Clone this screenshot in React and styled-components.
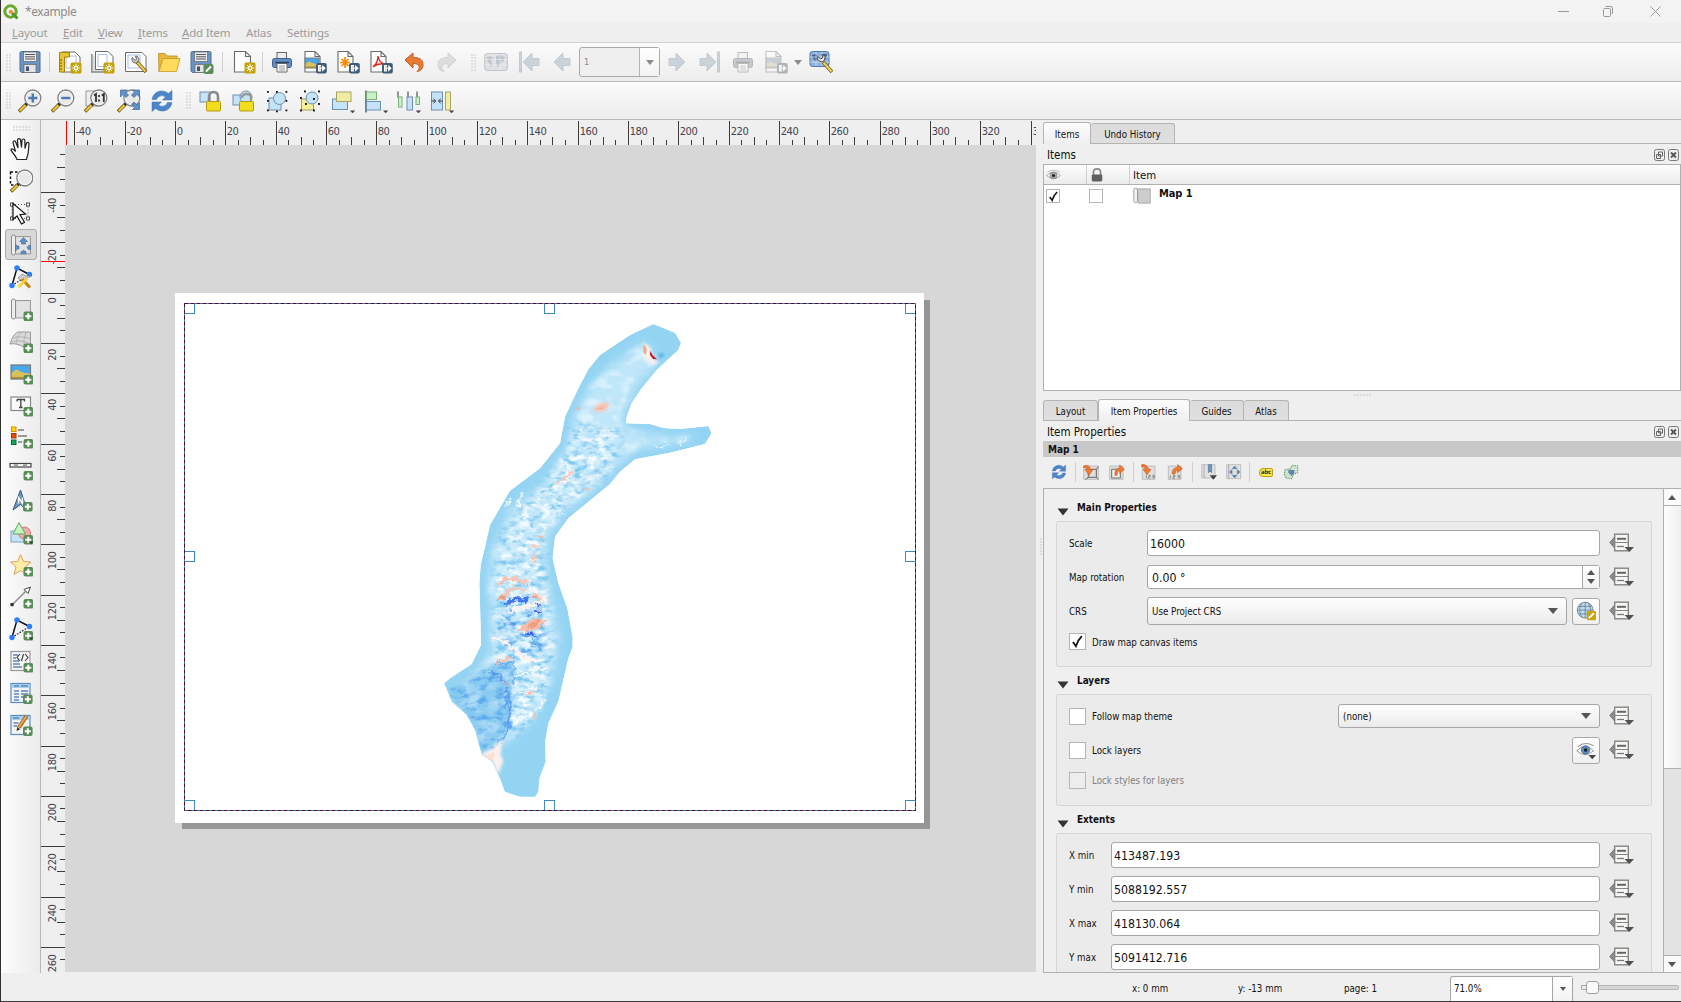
import React from 'react';
import styled, { createGlobalStyle, css } from 'styled-components';

const UI = `"DejaVu Sans Condensed", "DejaVu Sans", sans-serif`;
const MENU = `"Noto Sans", "Open Sans", sans-serif`;

const Global = createGlobalStyle`
  html, body { margin: 0; padding: 0; background: #efefef; overflow: hidden; }
  *, *::before, *::after { box-sizing: border-box; }
  body { font-family: ${UI}; font-stretch: condensed; font-size: 9.7px; color: #111; }
  svg { display: block; flex: none; }
`;

/* ---------- shell ---------- */
const Window = styled.div`
  width: 1681px; height: 1002px; display: flex; flex-direction: column;
  background: #efefef; border-left: 1px solid #2f2f2f; border-bottom: 1px solid #3c3c3c; overflow: hidden;
`;
const TitleBar = styled.header`
  height: 23px; flex: none; display: flex; align-items: center; background: #f3f3f3; padding-left: 2px;
  font-family: ${MENU}; font-size: 12px; letter-spacing: -0.42px; color: #8c8c8c;
`;
const TitleText = styled.span`flex: 1; padding-left: 6px;`;
const WinButtons = styled.div`display: flex; gap: 30px; padding-right: 15px;`;
const MenuBar = styled.nav`
  height: 20px; flex: none; display: flex; align-items: center; padding: 0 0 1px 11px; border-bottom: 1px solid #d2d2d2;
  font-family: ${MENU}; font-size: 11.5px; letter-spacing: -0.2px; color: #9b9b9b;
`;
const MenuItem = styled.div`
  width: ${p => p.$w}px; white-space: nowrap;
  &::first-letter { text-decoration: ${p => (p.$plain ? 'none' : 'underline')}; }
`;
const Toolbar = styled.div`
  height: ${p => p.$h}px; flex: none; display: flex; align-items: center; padding-left: 5px;
  background: linear-gradient(#fbfbfb, #ededed); border-bottom: 1px solid #b7b7b7;
`;
const ToolButton = styled.div`
  width: ${p => p.$w || 33}px; height: 32px; flex: none; display: flex; align-items: center; justify-content: center;
  opacity: ${p => (p.$off ? 0.4 : 1)};
`;
const Sep = styled.div`
  width: ${p => p.$w}px; height: ${p => p.$h || 20}px; flex: none; display: flex; justify-content: center;
  &::after { content: ''; width: 1px; background: #d0d0d0; }
`;
const Grip = styled.div`
  flex: none; width: ${p => p.$w}px; height: ${p => p.$h}px; margin: ${p => p.$m || 0};
  background-image: radial-gradient(circle at 1px 1px, #c6c6c6 0.6px, transparent 0.8px);
  background-size: 3px 3px;
`;
const PageCombo = styled.div`
  width: 81px; height: 30px; margin: 0 0 0 1px; flex: none; display: flex; border: 1px solid #a9a9a9; border-radius: 3px;
  background: #efefef; color: #7b8794; font-size: 9px;
`;
const PageValue = styled.div`flex: 1; padding-left: 4px; display: flex; align-items: center; border-right: 1px solid #b4b4b4;`;
const DropCell = styled.div`
  width: ${p => p.$w}px; display: flex; align-items: center; justify-content: center; background: linear-gradient(#fff, #f3f3f3);
`;
const Caret = styled.span`
  width: 0; height: 0; flex: none; border: ${p => p.$s || 4}px solid transparent; border-bottom: 0;
  border-top: ${p => (p.$s || 4) + 1}px solid ${p => p.$c || '#555'};
  ${p => p.$up && css`transform: rotate(180deg);`}
`;

const Body = styled.div`flex: 1; min-height: 0; display: flex;`;
const SideTools = styled.aside`
  width: 40px; flex: none; display: flex; flex-direction: column; align-items: center; padding-top: 6px;
  background: linear-gradient(90deg, #fcfcfc, #ececec); border-right: 1px solid #b7b7b7;
`;
const SideButton = styled.div`
  width: 32px; height: 31px; margin-bottom: 1px; flex: none; display: flex; align-items: center; justify-content: center;
  border: 1px solid ${p => (p.$on ? '#acacac' : 'transparent')}; border-radius: 3px;
  background: ${p => (p.$on ? '#d8d8d8' : 'none')};
`;
const Center = styled.main`
  width: 995px; flex: none; display: grid; grid-template: 25px 1fr / 24px 1fr; height: 852px;
`;
const RulerRow = styled.div`grid-column: 1 / 3;`;
const RulerText = styled.text`font-family: ${UI}; font-stretch: condensed; font-size: 11px; letter-spacing: -0.4px; fill: #3f4450;`;
const Canvas = styled.div`position: relative; background: #d7d7d7; overflow: hidden;`;
const Sheet = styled.div`
  position: absolute; left: 110px; top: 148px; width: 749px; height: 530px; background: #fff;
  &::before { content: ''; position: absolute; left: 749px; top: 7px; width: 6px; height: 529px; background: #969696; }
  &::after { content: ''; position: absolute; left: 7px; top: 530px; width: 748px; height: 6px; background: #969696; }
`;
const OnCanvas = styled.svg`position: absolute; left: ${p => p.$x}px; top: ${p => p.$y}px;`;

/* ---------- docks ---------- */
const Splitter = styled.div`
  width: 7px; height: 853px; flex: none; display: flex; align-items: center; justify-content: center;
`;
const Dock = styled.section`width: 638px; height: 853px; flex: none; display: flex; flex-direction: column;`;
const Tabs = styled.div`
  height: ${p => p.$h}px; flex: none; display: flex; align-items: flex-end; border-bottom: 1px solid #b4b4b4;
`;
const Tab = styled.div`
  width: ${p => p.$w}px; height: ${p => (p.$on ? 22 : 20)}px; flex: none; display: flex; align-items: center; justify-content: center;
  border: 1px solid #b4b4b4; border-left-width: ${p => (p.$first || p.$on ? 1 : 0)}px; border-bottom: 0;
  border-radius: 3px 3px 0 0; margin-bottom: ${p => (p.$on ? -1 : 0)}px; padding-top: 1px;
  background: ${p => (p.$on ? 'linear-gradient(#fdfdfd,#efefef)' : 'linear-gradient(#dcdcdc,#dfdfdf)')};
`;
const DockTitle = styled.div`
  height: 20px; flex: none; display: flex; align-items: center; justify-content: space-between; padding: 2px 2px 0 4px;
  font-size: 11.5px;
`;
const TitleIcons = styled.div`display: flex; gap: 3px;`;
const Tree = styled.div`height: 227px; flex: none; background: #fff; border: 1px solid #b0b0b0;`;
const TreeHead = styled.div`
  height: 20px; display: flex; background: linear-gradient(#fdfdfd, #ebebeb); border-bottom: 1px solid #b0b0b0;
  font-size: 11.3px;
`;
const HeadCell = styled.div`
  width: ${p => p.$w}; display: flex; align-items: center; padding: 1px 0 0 ${p => p.$pl}px; border-right: ${p => (p.$last ? 0 : 1)}px solid #cfcfcf;
`;
const TreeRow = styled.div`height: 22px; display: flex; align-items: center; padding-left: 2px;`;
const TreeName = styled.b`font-size: 11px; letter-spacing: -0.1px; margin: -6px 0 0 8px;`;
const SplitDots = styled.div`height: 8px; flex: none; display: flex; justify-content: center; align-items: center;`;
const ItemBar = styled.div`
  height: 16px; flex: none; display: flex; align-items: center; padding: 1px 0 0 5px; background: #c8c8c8; font-weight: bold; font-size: 10px;
`;
const PropTools = styled.div`height: 31px; flex: none; display: flex; align-items: center; padding: 0 0 1px 3px;`;
const Scroll = styled.div`flex: 1; min-height: 0; display: flex; border: 1px solid #b0b0b0; border-right: 0; overflow: hidden;`;
const Props = styled.div`flex: 1; min-width: 0; overflow: hidden; padding: 0 11px 0 12px;`;
const ScrollBar = styled.div`
  width: 18px; flex: none; display: flex; flex-direction: column; background: #e3e3e3; border-left: 1px solid #b0b0b0;
`;
const ScrollEnd = styled.div`
  height: 17px; flex: none; display: flex; align-items: center; justify-content: center; background: #fafafa; padding-right: 2px;
  border-${p => p.$edge}: 1px solid #b0b0b0;
`;
const Thumb = styled.div`height: 263px; background: linear-gradient(90deg, #fdfdfd, #efefef); border-bottom: 1px solid #b0b0b0;`;
const ThumbGap = styled.div`flex: 1;`;

const GroupTitle = styled.div`
  height: ${p => p.$h}px; display: flex; align-items: flex-end; gap: 8px; padding-bottom: 7px;
  font-weight: bold; font-size: 9.9px; line-height: 12px;
`;
const TitleTri = styled.svg`margin: 0 0 -2px 1px;`;
const Group = styled.div`
  height: ${p => p.$h}px; border: 1px solid #d6d6d6; border-radius: 2px; background: #ebebeb; padding: ${p => p.$pt}px 17px 0 12px;
`;
const Row = styled.div`height: ${p => p.$h}px; margin-bottom: ${p => p.$mb}px; display: flex; align-items: center;`;
const Lbl = styled.div`width: ${p => p.$w}px; flex: none; padding-top: 1px;`;
const Input = styled.div`
  height: 100%; flex: 1; display: flex; align-items: center; padding-left: ${p => p.$pl || 2}px; background: #fff;
  border: 1px solid #a6a6a6; border-radius: 3px; font-size: 12.2px; color: #111;
`;
const InputText = styled.span`padding-top: 1px;`;
const Spin = styled.div`
  width: 17px; height: 100%; margin-left: auto; display: flex; flex-direction: column; align-items: center; justify-content: center; gap: 4px;
  border-left: 1px solid #a6a6a6; background: linear-gradient(#fff, #f2f2f2);
`;
const Select = styled.div`
  height: 100%; ${p => (p.$w ? `width:${p.$w}px` : 'flex:1')}; display: flex; align-items: center; justify-content: space-between;
  padding: 0 8px 0 4px; border: 1px solid #a6a6a6; border-radius: 3px; background: linear-gradient(#fefefe, #ebebeb);
`;
const SquareBtn = styled.div`
  width: 28px; height: 27px; margin-left: ${p => p.$ml}; flex: none; display: flex; align-items: center; justify-content: center;
  border: 1px solid #a9a9a9; border-radius: 3px; background: linear-gradient(#fff, #f0f0f0);
`;
const Override = styled.svg`margin-left: 9px;`;
const Box = styled.div`
  width: ${p => p.$s}px; height: ${p => p.$s}px; flex: none; display: flex; align-items: center; justify-content: center;
  background: ${p => (p.$off ? '#ededed' : '#fff')}; border: 1px solid #b5b5b5; margin-right: ${p => p.$mr || 0}px;
`;
const CheckLabel = styled.span`flex: 1; padding-top: 1px; color: ${p => (p.$off ? '#808080' : '#111')};`;

const Status = styled.footer`height: 28px; flex: none; display: flex; align-items: center; padding-left: 1131px;`;
const StatusText = styled.span`width: ${p => p.$w}px; padding-top: 3px;`;
const ZoomBox = styled.div`
  width: 123px; height: 25px; display: flex; border: 1px solid #a6a6a6; border-bottom: 0; border-radius: 3px 3px 0 0; background: #fff; margin-top: 3px;
`;
const ZoomValue = styled.div`flex: 1; display: flex; align-items: center; padding: 0 0 1px 3px; border-right: 1px solid #a6a6a6;`;
const Slider = styled.div`width: 98px; height: 13px; margin-left: 8px; display: flex; align-items: center;`;
const GrooveL = styled.div`width: 5px; height: 5px; border: 1px solid #a6a6a6; border-right: 0; border-radius: 2px 0 0 2px;`;
const Knob = styled.div`width: 13px; height: 13px; border: 1px solid #a0a0a0; border-radius: 3px; background: #fafafa;`;
const GrooveR = styled.div`flex: 1; height: 5px; border: 1px solid #b5b5b5; border-left: 0; border-radius: 0 2px 2px 0; background: #d6d6d6;`;

/* ---------- icon fragments ---------- */
const Plus = ({ x = 13, y = 13 }) => (
  <g transform={`translate(${x} ${y})`}>
    <rect width="9.6" height="9.6" rx="2" fill="#5a8c5a" />
    <path d="M4.8 1.8v6M1.8 4.8h6" stroke="#fff" strokeWidth="2" />
  </g>
);
const Spark = () => (
  <g transform="translate(12.5 12.5)">
    <rect width="11" height="11" rx="1.5" fill="#c4a000" />
    <path d="M5.5 1.2v8.6M1.2 5.5h8.6M2.5 2.5l6 6M8.5 2.5l-6 6" stroke="#fff" strokeWidth="1" />
    <circle cx="5.5" cy="5.5" r="2" fill="#fff" /><circle cx="5.5" cy="5.5" r="1" fill="#c4a000" />
  </g>
);
const Export = () => (
  <g transform="translate(13 13)">
    <rect width="10.8" height="10.4" rx="2" fill="#415a75" />
    <path d="M5 2.500H2.500v5.500H5M4.300 5.300h4M6.700 3.200l2.200 2.100-2.200 2.100z" stroke="#fff" strokeWidth="1.100" fill="#fff" fillOpacity=".8" />
  </g>
);
const Drop = ({ x = 19, y = 21.5 }) => <path d={`M${x} ${y}h5.2l-2.600 2.800z`} fill="#444" />;
const PageShape = ({ x = 2.5, w = 15, h = 20.5 }) => (
  <path d={`M${x} 1.500h${w - 5}l5 5v${h - 5}h-${w}zM${x + w - 5} 1.500v5h5`} fill="#fff" stroke="#6b6b6b" strokeWidth="1.100" />
);
const Lens = ({ children }) => (
  <g>
    <path d="M1 22.500L8.500 15" stroke="#5a4a20" strokeWidth="3.600" /><path d="M1.600 22L8 15.600" stroke="#f4c430" strokeWidth="2.200" />
    <path d="M7.500 16l2-2" stroke="#222" strokeWidth="2.500" />
    <circle cx="14.800" cy="9" r="8" fill="#e9e9e9" stroke="#808080" strokeWidth="1.300" />
    <circle cx="14.800" cy="9" r="6.600" fill="none" stroke="#fafafa" strokeWidth=".8" />
    {children}
  </g>
);
const Disk = () => (
  <g>
    <path d="M2 3q0-1.500 1.500-1.500h17Q22 1.500 22 3v18.500q0 1-1 1H3.500L2 21z" fill="#6a94c4" stroke="#4b6e99" />
    <rect x="5.500" y="2" width="13" height="9.500" fill="#ececec" stroke="#666" strokeWidth=".7" />
    <path d="M7 4.500h10M7 6.800h10M7 9h10" stroke="#555" strokeWidth="1" />
    <rect x="6" y="14.500" width="12" height="8" fill="#e4e4e4" stroke="#666" strokeWidth=".7" /><rect x="8" y="16.500" width="3" height="4.500" fill="#3d5573" />
  </g>
);
const Printer = () => (
  <g>
    <rect x="7" y="2.500" width="9.500" height="7" fill="#eee" stroke="#666" /><rect x="2.500" y="8.500" width="19" height="9" rx="2" fill="#5f8fc4" stroke="#3f5f88" />
    <path d="M5 12.500h14" stroke="#24405f" strokeWidth="1.500" /><path d="M7 13.500h10v8.500H7z" fill="#fff" stroke="#666" /><path d="M9 16h6M9 18h6M9 20h6" stroke="#888" strokeWidth=".9" />
  </g>
);
const Scene = ({ x, y, w, h }) => (
  <g transform={`translate(${x} ${y}) scale(${w / 20} ${h / 13})`}>
    <rect width="20" height="13" fill="#4aa8ea" /><path d="M0 8q6-6 9-2 5 2 11 2v5H0z" fill="#d9c05a" /><path d="M0 11h20v2H0z" fill="#b09537" />
    <rect width="20" height="13" fill="none" stroke="#7a7a7a" strokeWidth="1.200" />
  </g>
);
const Scroll24 = () => (
  <g>
    <path d="M5.500 3.500H21.500V21H7" fill="#dcdcdc" stroke="#999" /><path d="M2.500 4q0-2 2-2t2 2v16q0 2-2 2t-2-2z" fill="#eee" stroke="#8a8a8a" />
    <path d="M8 5h12v14H8z" fill="#e8e8e8" opacity=".5" />
  </g>
);
const Nodes = () => (
  <g>
    <path d="M3 20.500L8 3l12.500 6.500" stroke="#111" strokeWidth="1.500" fill="none" /><path d="M3 20.500L20.500 9.500" stroke="#222" strokeWidth="1.300" strokeDasharray="1.500 1.500" />
    {[[3, 20.5], [8, 3], [20.5, 9.5]].map(([a, b]) => <circle key={a} cx={a} cy={b} r="2.700" fill="#2a7fff" />)}
  </g>
);
const RefreshArt = () => (
  <g fill="#4d86c8">
    <path d="M2 10.500C3 4 9 .5 15 2.500q2 .8 3.500 2L22 1.500v9.500h-9.500l3-3q-3-2.500-6.500-.5-1.800 1-2.500 3z" stroke="#3f72b0" strokeWidth=".5" />
    <path d="M22 13.500c-1 6.500-7 10-13 8q-2-.8-3.500-2L2 22.500V13h9.500l-3 3q3 2.500 6.500.5 1.800-1 2.500-3z" stroke="#3f72b0" strokeWidth=".5" />
  </g>
);
const World = () => (
  <g><rect x=".8" y="3.500" width="22.500" height="17" rx="3" fill="#c2c8cf" stroke="#7c8794" strokeWidth="1.200" />
    <path d="M3 7l4-1 3 2-2 3 1 4-2 3-2-5-2-3zM12 6l4-1 5 2-1 4-3 1-2 5-2-1-1-5z" fill="#6f7f92" />
    <path d="M8 4v16M16 4v16M1 9.500h22M1 15h22" stroke="#fff" strokeWidth=".7" opacity=".7" /></g>
);

const ICONS = {
  save: <Disk />,
  newLayout: <g><path d="M4 2h13l5 5v15H4z" fill="#fff" stroke="#6b6b6b" /><path d="M8 6h10v12H8z" fill="#fff" stroke="#a9bde8" /><path d="M1.500 2.500h10v4.500h-5v15h-5z" fill="#e8c530" stroke="#a8830a" /><path d="M2 10h2M2 13h2M2 16h2M2 19h2" stroke="#7a6000" /><Spark /></g>,
  duplicate: <g><path d="M.8 4V22h18" fill="#ddd" stroke="#888" strokeWidth="1.400" /><path d="M4.500 1.500H17l5 5V19.500H4.500z" fill="#fff" stroke="#6b6b6b" /><path d="M7 4.500h9v12H7z" fill="none" stroke="#a9bde8" /><Spark /></g>,
  manager: <g><path d="M1.500 2.500H18l4 4V21.500H1.500z" fill="#fff" stroke="#6b6b6b" /><path d="M4 5h12v13H4z" fill="none" stroke="#a9bde8" /><path d="M8.500 7.500a3.500 3.500 0 1 0 3-1.500l1 3-1.500 1.500z" fill="#ccc" stroke="#666" /><path d="M13 12l9 10" stroke="#6d5a22" strokeWidth="3.600" /><path d="M13.500 12.500l8 9" stroke="#edc84a" strokeWidth="2.200" /></g>,
  folder: <g><path d="M1.500 3.500H8l2 2.500h10v3H6L2 21.500z" fill="#e8b93c" stroke="#b98c20" strokeWidth=".8" /><path d="M6 8.500h17L19.500 21.500H2z" fill="#ffd95a" stroke="#c49a2a" strokeWidth=".8" /></g>,
  saveAs: <g><g transform="translate(-1 0)"><Disk /></g><rect x="13.500" y="14" width="10" height="10" rx="2" fill="#5a8c5a" /><path d="M16 21.500l5-5" stroke="#fff" strokeWidth="2" /></g>,
  page: <g><PageShape x={2.5} w={16} /><Spark /></g>,
  printer: <Printer />,
  exImage: <g><PageShape x={2} /><Scene x={2} y={8} w={14} h={10} /><Export /></g>,
  exSvg: <g><PageShape x={2} /><path d="M9 7v11M4 12.500h10M5.500 9l7 7M12.500 9l-7 7" stroke="#ff8a00" strokeWidth="1.700" /><Export /></g>,
  exPdf: <g><PageShape x={2} /><path d="M4 17q5-4 5-11 1 7 7 8-7-1-12 3z" fill="none" stroke="#e2271a" strokeWidth="1.400" /><Export /></g>,
  undo: <path d="M3 10l8-7v4.500c8 0 10 3 10 7.500 0 3-2 6-6 6.500 2-2 3-4 1.500-6-1.200-1.800-3-2-5.500-2v4.500z" fill="#e87b36" stroke="#c25c1c" />,
  redo: <path d="M21 10l-8-7v4.500c-8 0-10 3-10 7.500 0 3 2 6 6 6.500-2-2-3-4-1.500-6 1.200-1.800 3-2 5.500-2v4.500z" fill="#bbbdb8" stroke="#9a9c98" />,
  world: <World />,
  first: <g fill="#8ea0b4" stroke="#7c8c9e"><rect x="2.500" y="2" width="2" height="20" /><path d="M22 8.500h-7V3l-9 9 9 9v-5.500h7z" /></g>,
  prev: <path d="M20 8.500h-7V3l-9 9 9 9v-5.500h7z" fill="#8ea0b4" stroke="#7c8c9e" />,
  next: <path d="M4 8.500h7V3l9 9-9 9v-5.500H4z" fill="#8ea0b4" stroke="#7c8c9e" />,
  last: <g fill="#8ea0b4" stroke="#7c8c9e"><rect x="19.500" y="2" width="2" height="20" /><path d="M2 8.500h7V3l9 9-9 9v-5.500H2z" /></g>,
  printerGray: <g filter="grayscale(.75)"><Printer /></g>,
  exGray: <g filter="grayscale(.75)"><PageShape x={2} /><Scene x={2} y={8} w={14} h={10} /><Export /></g>,
  atlasSet: <g><rect x="1" y="1.500" width="19" height="15" rx="2.500" fill="#8fb2dd" stroke="#4f78ad" /><path d="M3 5l4-1 2 3-2 5-3-4zM12 4l6 0-1 5-3 1z" fill="#3f5f8a" /><path d="M7 2v14M13 2v14M1 7h19M1 12h19" stroke="#dfe9f6" strokeWidth=".7" /><path d="M9 6.500a3.600 3.600 0 1 0 4.500-2l.5 3-2.500 1.500z" fill="#f2f2f2" stroke="#444" /><path d="M14 12l9 10" stroke="#6d5a22" strokeWidth="3.600" /><path d="M14.500 12.500l8 9" stroke="#edd05a" strokeWidth="2.200" /></g>,
  zoomIn: <Lens><path d="M14.800 4.500v9M10.300 9h9" stroke="#4a7ab8" strokeWidth="2.400" /></Lens>,
  zoomOut: <Lens><path d="M10.300 9h9" stroke="#4a7ab8" strokeWidth="2.400" /></Lens>,
  zoomOne: <g><path d="M2 2h12v15H2z" fill="#eee" stroke="#999" /><Lens><path d="M10 6.500l2-1.500v8M17.800 6.500l2-1.500v8M15 6v2M15 10.500v2" stroke="#333" strokeWidth="1.800" fill="none" /></Lens></g>,
  zoomFull: <g><Lens /><g fill="#5f8fc9" stroke="#41699c" strokeWidth=".7"><path d="M3.500 1h7l-2 2 3 3-2.500 2.500-3-3-2.500 2.500zM22.500 1h-7l2 2-3 3L17 8.500l3-3 2.500 2.500zM22.500 20.500h-7l2-2-3-3L17 13l3 3 2.500-2.500z" /></g></g>,
  refresh: <RefreshArt />,
  lock: <g><rect x="1" y="3" width="10" height="10" fill="#c5e3f8" stroke="#6d8fae" /><path d="M10 13V8q0-5 4.500-5T19 8v5" fill="none" stroke="#8b8b8b" strokeWidth="2.600" /><rect x="7.500" y="12.500" width="14" height="9.500" rx="1" fill="#f3dc1e" stroke="#b39b10" /></g>,
  unlock: <g><rect x="1" y="6" width="10" height="10" fill="#c5e3f8" stroke="#6d8fae" /><circle cx="14" cy="8" r="6" fill="#c5e3f8" stroke="#6d8fae" /><path d="M10 9q0-4 4.500-4T19 8v5" fill="none" stroke="#999" strokeWidth="2.400" /><rect x="7.500" y="12.500" width="14" height="9.500" rx="1" fill="#f3dc1e" stroke="#b39b10" /></g>,
  group: <g><rect x="4" y="9" width="12" height="12" fill="#c5e3f8" stroke="#6d8fae" /><circle cx="14.500" cy="9.500" r="6" fill="#c5e3f8" stroke="#6d8fae" />{[[2, 2], [11, 2], [20.5, 2], [2, 11], [20.5, 11], [2, 20.5], [11, 21.5], [20.5, 20.5]].map(([a, b], i) => <rect key={i} x={a} y={b} width="1.800" height="1.800" fill="#111" />)}</g>,
  ungroup: <g><rect x="3.500" y="10" width="12" height="11" fill="#f5ef9a" stroke="#a8a05a" /><circle cx="14" cy="9" r="6" fill="#c5e3f8" stroke="#6d8fae" />{[[6, 1.5], [20, 1.5], [20, 14], [7, 14], [2, 8], [2, 20.5], [15, 20.5], [15, 9]].map(([a, b], i) => <rect key={i} x={a} y={b} width="1.900" height="1.900" fill="#111" />)}</g>,
  raise: <g><rect x="1.500" y="10" width="15" height="10.500" fill="#c5e3f8" stroke="#6d8fae" /><rect x="5.500" y="3" width="14.500" height="9.500" fill="#f0eda0" stroke="#a8a468" /><Drop /></g>,
  align: <g><path d="M2 1.500v22" stroke="#333" strokeWidth="1.200" /><rect x="2.500" y="3" width="10" height="7.500" fill="#c8f2c8" stroke="#7cae7c" /><rect x="2.500" y="12.500" width="14" height="8.500" fill="#c5e3f8" stroke="#6d8fae" /><Drop /></g>,
  distribute: <g><path d="M1 2.500v6M11 2.500v6M20 2.500v6" stroke="#333" /><rect x="1.500" y="8" width="3.500" height="10" fill="#c8f2c8" stroke="#7cae7c" /><rect x="10" y="8" width="5.500" height="13" fill="#c5e3f8" stroke="#6d8fae" /><rect x="19" y="8" width="3.500" height="7.500" fill="#c8f2c8" stroke="#7cae7c" /><Drop x={18.8} /></g>,
  resize: <g><rect x="1.500" y="3" width="11" height="18" fill="#c5e3f8" stroke="#6d8fae" /><rect x="15.500" y="3" width="5" height="18" fill="#f0eda0" stroke="#a8a468" /><path d="M1.500 12h3.500M3.500 9.800l2.300 2.200-2.300 2.200M12.500 12H9M10.700 9.800L8.400 12l2.300 2.200" fill="none" stroke="#333" /><Drop /></g>,
  hand: <path d="M8 22.500q-1-3-4-6.500-3-3.500-1.500-4t4 2.500L4 5.500Q4.500 3 6.500 4.500L9 11 8.500 3Q9.500.5 11.500 2.500l1 8L13 3q1.500-2 2.800 0l.2 8.500L17.500 6q1.800-1.500 2.500.5-.3 5-1 10.500-1 3-1.500 5.500z" fill="#fff" stroke="#222" strokeWidth="1.200" />,
  zoomBox: <g><path d="M1.500 3h13v13h-13z" fill="none" stroke="#111" strokeWidth="1.500" strokeDasharray="2.500 2" /><g transform="translate(1 0)"><Lens /></g></g>,
  select: <g><path d="M3 3.500h16v14H3z" fill="none" stroke="#555" strokeDasharray="1 2" /><g fill="#fff" stroke="#555">{[[1.5, 2], [17.5, 2], [1.5, 16], [17.5, 16]].map(([a, b], i) => <rect key={i} x={a} y={b} width="3" height="3" />)}</g><path d="M4 2.500v16l4-3.500 4.500 8 3-1.700-4.500-7.600 5.500-.7z" fill="#fff" stroke="#111" strokeWidth="1.200" /></g>,
  moveContent: <g><Scroll24 /><g fill="#5f8fc9" stroke="#41699c" strokeWidth=".6"><path d="M14.500 4.500l4 4h-2v2.500h-4V8.500h-2z" /><path d="M6.500 11l1.500 2h2v3H8l-1.500 2zM21.500 12.500v4h-2l-1.500-2 1.500-2zM12 20.800v-2l2.500-1.500 2.500 1.500v2z" /></g></g>,
  editNodes: <g><Nodes /><path d="M9 13l4-4 4 2 5 0-4 2-5 3z" fill="#ccc" stroke="#888" strokeWidth=".7" /><path d="M13 14l8 8.500" stroke="#c98416" strokeWidth="3.200" /><path d="M18 13.500L9.500 22" stroke="#f5d433" strokeWidth="3" /></g>,
  addMap: <g><Scroll24 /><Plus x={14.5} y={14.5} /></g>,
  add3d: <g><path d="M1 15q3-10 8-12h12.500v15l-6 .5q-8-5-14.500-3.500z" fill="#dadada" stroke="#999" /><path d="M4 9q8-3 17.500 1M2.500 13q9-3 19 2M12 3q-5 6-5 12M17 3q-3 8-2 15" fill="none" stroke="#aaa" strokeWidth=".8" /><Plus x={14.5} y={14.5} /></g>,
  addImg: <g><Scene x={2} y={4} w={19.5} h={14} /><Plus x={14.5} y={14} /></g>,
  addLabel: <g><rect x="2" y="4" width="19.500" height="13.500" fill="#fafafa" stroke="#888" strokeWidth="1.200" /><path d="M8 6.500h7.500v2M8 6.500v2M11.800 6.500V14M10 14.500h3.600" stroke="#444" strokeWidth="1.300" fill="none" /><Plus x={14.5} y={14} /></g>,
  legend: <g><rect x="2.500" y="2" width="4.500" height="4.500" fill="#ffd800" stroke="#e08a00" /><rect x="2.500" y="8.500" width="4.500" height="4.500" fill="#e8500a" stroke="#a83200" /><rect x="2.500" y="15" width="4.500" height="4.500" fill="#0da862" stroke="#046a3a" /><path d="M9 5h6M9 11h9M9 17h4" stroke="#999" strokeWidth="1.800" /><Plus x={14.5} y={14} /></g>,
  scalebar: <g><rect x="1" y="6.500" width="21" height="3.500" fill="#fff" stroke="#444" strokeWidth="1.200" /><path d="M5 8.200h4M14 8.200h4" stroke="#999" strokeWidth="2" /><Plus x={14.5} y={14} /></g>,
  north: <g><path d="M11.500 1L18 21l-6.500-5.500L4 21z" fill="#6c97c8" stroke="#34567e" /><path d="M9.500 14.500v-6l4 6v-6" stroke="#fff" strokeWidth="1.400" fill="none" /><Plus x={14} y={13} /></g>,
  shape: <g><rect x="2" y="10" width="13" height="11" fill="#c5e3f8" stroke="#7ea4c6" /><circle cx="15.500" cy="12" r="6" fill="#f5aaaa" stroke="#d07a7a" /><path d="M10 1.500L16.500 13H4z" fill="#c4f2c0" stroke="#62a860" /><Plus x={14.5} y={14} /><Drop x={19.5} y={20.5} /></g>,
  star: <g><path d="M11.500 1.500l3 7 7.500.5-5.800 5L18 21.500l-6.500-4-6.500 4L7 14 1.500 9 8.700 8.500z" fill="#fdeca6" stroke="#dba262" /><Plus x={14.5} y={14} /></g>,
  arrow: <g><path d="M3 20L18 5" stroke="#8a8a8a" strokeWidth="1.500" /><rect x="1.500" y="18" width="3.200" height="3.200" fill="#333" /><path d="M21.500 2l-6.500 2.500 4 4z" fill="#fff" stroke="#444" /><Plus x={14.5} y={14} /></g>,
  addNodes: <g><Nodes /><Plus x={14.5} y={14} /><Drop x={19.5} y={20.5} /></g>,
  html: <g><rect x="2" y="2.500" width="19" height="19" fill="#f6f6f6" stroke="#999" strokeWidth="1.200" /><path d="M4 6h5M4 9h3M4 12h6M4 15h7M4 18h9" stroke="#5b87bd" strokeWidth="1.600" /><path d="M11 5L8 8.500l3 3.500M16 5l3 3.500-3 3.500M14.500 5l-2 7" fill="none" stroke="#333" strokeWidth="1.100" /><Plus x={14.5} y={14} /></g>,
  table: <g><rect x="2" y="2.500" width="19" height="19" fill="#f3f3f3" stroke="#5b8ac0" strokeWidth="1.200" /><rect x="2.600" y="3" width="18" height="4" fill="#a8d0ee" /><path d="M5 5h5M12 5h7M5 10h5M12 10h7M5 13h5M12 13h7M5 16h5M12 16h3M5 19h5" stroke="#5b87bd" strokeWidth="1.300" /><Plus x={14} y={13.5} /></g>,
  fixedTable: <g><rect x="2" y="2.500" width="19" height="19" fill="#f3f3f3" stroke="#5b8ac0" strokeWidth="1.200" /><rect x="2.600" y="3" width="18" height="4" fill="#a8d0ee" /><path d="M4 5h6M4.500 10h5M4.500 13h4" stroke="#5b87bd" strokeWidth="1.300" /><path d="M10 14.500L17.500 3" stroke="#a0641c" strokeWidth="4" /><path d="M10 14L17.300 3.200" stroke="#eda94c" strokeWidth="2" /><path d="M7.500 18l.8-4 3 2.200z" fill="#333" /><Plus x={14} y={13.5} /></g>,
  mapIn: <g><path d="M1 3h22v20H1z" fill="#dedede" stroke="#aaa" /><path d="M8 8h12v12H8zM4 4l4 4M20 8l3-4M20 20l3 3M8 20l-4 3" fill="none" stroke="#555" strokeWidth="1.300" /><path d="M1 3q9-3 10 5h4l-6 9-6-9h4Q6 5 1 5z" fill="#ee7a35" stroke="#cc5a18" /></g>,
  mapOut: <g><path d="M1 3h20v20H1z" fill="#dedede" stroke="#aaa" /><path d="M4 8h13v13H4z" fill="#eee" stroke="#666" strokeWidth="1.400" /><path d="M9 17Q8 6 16 6V2l7 6-7 6v-4q-4 0-4 7z" fill="#ee7a35" stroke="#cc5a18" /></g>,
  scaleIn: <g><path d="M2 3h19v20H2z" fill="#dedede" stroke="#aaa" /><path d="M8 16.500v5M11 17h3v2h-3v2.500h3M17 17h3v4h-3M17 19h3" stroke="#888" strokeWidth="1.300" fill="none" /><path d="M1 1q9-1 10 7h4l-6 8-6-8h4Q6 4 1 4z" fill="#ee7a35" stroke="#cc5a18" /></g>,
  scaleOut: <g><path d="M2 3h19v20H2z" fill="#dedede" stroke="#aaa" /><path d="M5 17v5M9 17h3v2H9v2.500h3M16 17h3v4h-3M16 19h3" stroke="#888" strokeWidth="1.300" fill="none" /><path d="M8 15Q7 6 16 5V1l7 6-7 6V9q-4 0-4 6z" fill="#ee7a35" stroke="#cc5a18" /></g>,
  bookmark: <g><path d="M1 1h20v20H1z" fill="#e2e2e2" stroke="#aaa" /><path d="M4.500 1v20" stroke="#aaa" strokeWidth="1.500" /><path d="M11 1h5v12l-2.500-2.500L11 13z" fill="#7595b8" stroke="#4f7196" /><path d="M13 17h11l-5.500 6.500z" fill="#444" /></g>,
  extent: <g><path d="M1 1h21v21H1z" fill="#e2e2e2" stroke="#aaa" /><path d="M4 1v21" stroke="#aaa" strokeWidth="1.500" /><path d="M13 3l3.500 4h-7zM13 21l-3.500-4h7zM5 12l4-3.500v7zM21 12l-4-3.500v7z" fill="#5b82b0" stroke="#5b82b0" strokeWidth="1" /></g>,
  clip: <g><path d="M3 9l8-2 3-5 8 1v10l-6 2-3 7-9-1-2-6z" fill="#cfe3d2" stroke="#5c9a6c" strokeWidth="1.600" strokeDasharray="2 1.500" /><path d="M8 9h9v4l-4 5-5-5z" fill="#5f86ac" /></g>,
  globe: <g><circle cx="11" cy="11" r="9.500" fill="#b9dcf5" stroke="#6c7a88" /><path d="M1.500 11h19M3 6.500h16M3 15.500h16M11 1.500v19M7 2.500q-5 8.500 0 17M15 2.500q5 8.500 0 17" fill="none" stroke="#6b757f" strokeWidth=".9" /><rect x="13" y="12" width="11" height="11" rx="1.500" fill="#c9a50c" /><path d="M15.500 20.500l6-6" stroke="#fff" strokeWidth="2.400" /></g>,
  eye: <g><path d="M2 8q9-7 19-1" stroke="#999" strokeWidth="1.300" fill="none" /><path d="M1 13q10-11 20 0-10 9-20 0z" fill="#fff" stroke="#999" strokeWidth="1.200" /><circle cx="11.500" cy="12" r="5" fill="#5d8cc4" stroke="#3d648f" /><circle cx="11.500" cy="12" r="2" fill="#111" /><path d="M15 18h9l-4.500 5z" fill="#444" /></g>,
  eyeGray: <g><path d="M2 6.500q10-6 20 0" stroke="#bbb" strokeWidth="1.500" fill="none" /><path d="M1 12q11-11 22 0-11 10-22 0z" fill="#fff" stroke="#999" strokeWidth="1.400" /><circle cx="12" cy="12" r="5.500" fill="#aaa" stroke="#777" /><circle cx="12" cy="12" r="2.500" fill="#222" /></g>,
  padlock: <g><path d="M6 12V7q0-5.500 6-5.500T18 7v5" fill="none" stroke="#888" strokeWidth="3" /><rect x="3" y="11" width="18" height="12" rx="2" fill="#606060" /></g>,
  mapItem: <g><path d="M6 2.500h17v19H7z" fill="#cdcdcd" stroke="#999" /><path d="M1 4q0-2.500 2.500-2.500T6 4v14q0 3-2.500 3T1 18z" fill="#f1f1f1" stroke="#888" /></g>,
};
const Icon = ({ n, s = 24 }) => <svg width={s} height={s} viewBox="0 0 24 24" fill="none">{ICONS[n]}</svg>;

const AbcTag = styled.span`
  display: flex; align-items: center; justify-content: center; width: 14px; height: 9px; border: 1px solid #b8a012; border-radius: 4px 2px 2px 4px;
  background: #fbe94e; font-size: 6px; letter-spacing: -0.3px; font-weight: bold; color: #333; line-height: 6px;
`;

const Logo = () => (
  <svg width="16" height="16" viewBox="0 0 16 16"><circle cx="7.500" cy="7.500" r="5.700" fill="none" stroke="#6aa82c" strokeWidth="3" /><path d="M9 9l5.500 5.500" stroke="#4f9628" strokeWidth="3" /><circle cx="7.800" cy="7.800" r="2" fill="#f28c28" /></svg>
);
const DataOverride = () => (
  <Override width="25" height="20" viewBox="0 0 25 20">
    <path d="M6 3.500v12L.8 9.500z" fill="#8a8a8f" stroke="#7a7a7e" /><rect x="5.700" y="1.200" width="13.600" height="16.600" fill="#f7f7f7" stroke="#85857e" strokeWidth="1.400" />
    <path d="M8 5.800h9" stroke="#666" strokeWidth="2" /><path d="M6 9.500h13" stroke="#85857e" /><path d="M8 13.500h7" stroke="#777" strokeWidth="1.300" /><path d="M15.500 14h9.500l-4.700 5z" fill="#505050" />
  </Override>
);
const Tick = ({ s = 10 }) => <svg width={s} height={s + 2} viewBox="0 0 10 12"><path d="M.8 6.500l2.700 3.800Q5 5 9 1" fill="none" stroke="#111" strokeWidth="1.700" /></svg>;
const Float = () => <svg width="11" height="12" viewBox="0 0 11 12"><rect x=".5" y=".5" width="10" height="11" rx="2" fill="none" stroke="#777" /><path d="M4.500 3h4v4h-4zM2.500 5.500h4v4h-4z" fill="#efefef" stroke="#666" /></svg>;
const CloseX = () => <svg width="11" height="12" viewBox="0 0 11 12"><rect x=".5" y=".5" width="10" height="11" rx="2" fill="none" stroke="#777" /><path d="M3 3.500l5 5M8 3.500l-5 5" stroke="#555" strokeWidth="1.800" /></svg>;

/* ---------- rulers ---------- */
const SCALE = 2.5165;
const marks = (from, to) => { const a = []; for (let v = from; v <= to; v += 5) a.push(v); return a; };
const HRuler = () => (
  <svg width="995" height="25">
    {marks(-40, 340).map(v => {
      const x = Math.round(134 + v * SCALE) + 0.5;
      const top = v % 20 === 0 ? 1 : v % 10 === 0 ? 17 : 20;
      return <g key={v}><path d={`M${x} ${top}V25`} stroke="#3c3c3c" />{v % 20 === 0 && <RulerText x={x + 1.2} y="14.600">{v}</RulerText>}</g>;
    })}
    <path d="M25.500 1V25" stroke="#ff0000" />
  </svg>
);
const VRuler = () => (
  <svg width="24" height="827">
    {marks(-55, 265).map(v => {
      const y = Math.round(147.6 + v * SCALE) + 0.5;
      const left = v % 20 === 0 ? 0 : v % 10 === 0 ? 16 : 19;
      const gap = v === 0 ? 4 : v === -20 ? 7 : Math.abs(v) < 100 ? 5.5 : 7;
      return <g key={v}><path d={`M${left} ${y}H24`} stroke="#3c3c3c" />{v % 20 === 0 && <RulerText textAnchor="end" transform={`translate(14.500 ${y + gap}) rotate(-90)`}>{v}</RulerText>}</g>;
    })}
    <path d="M0 116.500H24" stroke="#ff0000" />
  </svg>
);

/* ---------- glacier raster layer ---------- */
const OUT = 'M670 42L735 68 753 98 745 120 680 180 635 235 605 280 590 320 587 340 660 342 700 354 750 357 835 348 845 370 825 402 720 428 615 448 570 485 540 522 470 580 415 625 375 680 368 745 385 820 412 895 428 980 428 1010 415 1045 400 1110 385 1175 355 1240 345 1295 347 1355 328 1405 325 1445 315 1460 270 1460 225 1445 210 1405 205 1395 185 1355 155 1335 135 1260 110 1215 65 1175 42 1120 60 1105 125 1062 153 1005 150 880 148 820 152 765 165 710 180 645 240 542 330 475 390 400 405 320 440 245 475 178 510 135 600 75z';
const CORE = 'M640 100L680 150 620 230 570 330 590 360 720 385 790 375 770 395 620 415 550 480 480 550 400 610 350 680 345 780 370 900 385 980 370 1080 340 1180 300 1240 240 1290 200 1300 150 1290 140 1230 70 1160 130 1100 180 1040 185 900 175 820 190 720 240 600 340 520 410 420 430 330 480 230 540 170z';
const TRIBUTARY = 'M55 1140L180 1070 250 1050 245 1180 230 1260 160 1325 135 1260 110 1215z';
const noise = (id, freq, seed, rgb, gain, bias) => (
  <filter id={id} x="-5%" y="-5%" width="110%" height="110%" colorInterpolationFilters="sRGB">
    <feGaussianBlur in="SourceAlpha" stdDeviation="10" result="mask" />
    <feTurbulence type="fractalNoise" baseFrequency={freq} numOctaves="4" seed={seed} />
    <feColorMatrix values={`0 0 0 0 ${rgb[0]} 0 0 0 0 ${rgb[1]} 0 0 0 0 ${rgb[2]} ${gain} 0 0 0 ${bias}`} />
    <feComposite in2="mask" operator="in" />
  </filter>
);
const Glacier = () => (
  <OnCanvas $x={365} $y={165} width="300" height="500" viewBox="0 0 900 1500">
    <defs>
      <clipPath id="out"><path d={OUT} /></clipPath>
      <filter id="soft"><feGaussianBlur stdDeviation="14" /></filter>
      <filter id="soft2"><feGaussianBlur stdDeviation="4" /></filter>
      <filter id="rough" x="-20%" y="-20%" width="140%" height="140%">
        <feTurbulence type="fractalNoise" baseFrequency=".06" numOctaves="4" seed="4" result="t" />
        <feDisplacementMap in="SourceGraphic" in2="t" scale="30" xChannelSelector="R" yChannelSelector="G" />
        <feGaussianBlur stdDeviation="1.500" />
      </filter>
      {noise('white', '.03 .055', 8, [1, 1, 1], 4.5, -2.15)}
      {noise('pale', '.02 .03', 13, [0.93, 0.98, 1], 3.5, -1.5)}
      {noise('blue', '.035 .06', 21, [0.38, 0.73, 0.93], 3.5, -1.65)}
      {noise('deep', '.035 .06', 5, [0.24, 0.58, 0.92], 4, -1.95)}
    </defs>
    <g clipPath="url(#out)">
      <path d={OUT} fill="#94d4f3" />
      <path d={CORE} fill="#bfe6f9" filter="url(#soft)" />
      <path d={CORE} filter="url(#pale)" opacity=".6" />
      <path d="M420 340L580 350 560 480 400 610 350 680 360 900 380 1000 350 1180 260 1290 200 1270 190 1040 185 820 210 660 300 560 400 440z" filter="url(#blue)" opacity=".75" />
      <path d="M440 350L560 350 540 480 400 600 340 680 350 900 370 1000 340 1160 260 1250 200 1230 200 1040 195 820 220 660 310 560 410 440z" filter="url(#white)" opacity=".8" />
      <path d="M250 880L330 890 350 980 330 1030 270 1040 210 1000 210 920z" filter="url(#deep)" opacity=".8" />
      <path d={TRIBUTARY} fill="#79c2ee" opacity=".75" filter="url(#soft2)" />
      <path d={TRIBUTARY} filter="url(#deep)" opacity=".6" />
      <path d={TRIBUTARY} filter="url(#pale)" opacity=".35" />
      <path d="M205 1395q10-40 40-60 50-40 110-140l-10 160-30 120h-90z" fill="#94d4f3" filter="url(#soft2)" opacity=".9" />
      <g filter="url(#rough)" fill="none" strokeLinecap="round">
        <path d="M175 1085q60 10 60 80 12 60-10 110-15 30-40 45" stroke="#4590ec" strokeWidth="9" opacity=".75" />
        <path d="M200 1060h50v60" stroke="#55a2ec" strokeWidth="8" opacity=".7" />
        <path d="M235 880q25-22 55-10" stroke="#3f74ee" strokeWidth="14" />
        <path d="M315 905h18M320 882h6M292 970l20 8" stroke="#3b62f0" strokeWidth="7" />
        <path d="M310 995l20 15" stroke="#3f93e6" strokeWidth="18" opacity=".6" />
        <path d="M205 815q50-22 90 10l55 50M190 985q40 5 90 60M260 1030q30 30 80 20M290 890l55-25M235 900l60-10" stroke="#fdf4f2" strokeWidth="9" />
        <path d="M260 1095q50-10 90-20M270 1150l50-15M250 1240l60-30M320 1200l30-30" stroke="#f4fbff" strokeWidth="6" />
        <path d="M210 815q40-20 80 5M215 865l20-20M240 835l45 8M300 860q25-15 30 5" stroke="#f9c3b2" strokeWidth="10" />
        <path d="M210 870l14-14M305 863l16-3" stroke="#f2947a" strokeWidth="6" />
        <path d="M305 930l40 5-28 20-42 4z" fill="#f29d82" stroke="#f8bda9" strokeWidth="8" />
        <path d="M220 1118l10 8M285 1150h20M200 1055l50-12M318 1215v10M305 710h20M312 735v15M325 680h8M465 538h15" stroke="#f9bfae" strokeWidth="7" />
        <path d="M370 525l30-10 30-30-30-30M275 550l-12 35M240 570l-10 15" stroke="#fff" strokeWidth="5" />
        <path d="M400 508l26-24M375 523l15-8" stroke="#f9c3b3" strokeWidth="6" />
        <path d="M745 405l25-22M670 410h30M705 400l10 10" stroke="#e9f7fe" strokeWidth="4" />
      </g>
      <path d="M490 295q20-22 50-15l-15 22-28 5z" fill="#f9c2b0" filter="url(#soft2)" />
      <path d="M502 296l22-6-10 8z" fill="#f3a58c" />
      <path d="M440 292h10v8h-10z" fill="#f7b49f" />
      <path d="M640 95l22 20 5 30 20 14-20 6-26-25z" fill="#fff1ec" filter="url(#soft2)" />
      <path d="M640 102l10 12-2 22-8-10z" fill="#f5a58a" />
      <path d="M661 122l7 14 13 12-12-1-9-12z" fill="#c71822" />
      <path d="M685 130l20 2-15 14z" fill="#4aa5e4" filter="url(#soft2)" />
      <path d="M150 1335l40-22 28-30-6 50 8 20-15 42-22-50z" fill="#fdf0ec" filter="url(#soft2)" />
      <path d="M165 1340l25-15 5 12-15 18z" fill="#fcded4" />
    </g>
  </OnCanvas>
);

const HANDLES = [[0, 0], [360, 0], [721, 0], [0, 248], [721, 248], [0, 497], [360, 497], [721, 497]];
const Frame = () => (
  <OnCanvas $x={119} $y={158} width="732" height="508" fill="none">
    <rect x=".5" y=".5" width="731" height="507" stroke="#3d93c4" />
    {HANDLES.map(([x, y], i) => <rect key={i} x={x + 0.5} y={y + 0.5} width="10" height="10" fill="#fff" stroke="#3d8abf" />)}
    <rect x=".5" y=".5" width="731" height="507" stroke="#56072f" strokeDasharray="4 2" />
  </OnCanvas>
);

const MENUS = [['Layout', 51], ['Edit', 35], ['View', 40], ['Items', 44], ['Add Item', 64], ['Atlas', 41, true], ['Settings', 60, true]];
const SIDE = ['hand', 'zoomBox', 'select', 'moveContent', 'editNodes', 'addMap', 'add3d', 'addImg', 'addLabel', 'legend', 'scalebar', 'north', 'shape', 'star', 'arrow', 'addNodes', 'html', 'table', 'fixedTable'];
const EXTENTS = [['X min', '413487.193'], ['Y min', '5088192.557'], ['X max', '418130.064'], ['Y max', '5091412.716']];
const B = ({ n, ...r }) => <ToolButton {...r}><Icon n={n} /></ToolButton>;
const P = ({ n, w = 26 }) => <ToolButton $w={w}><Icon n={n} s={16} /></ToolButton>;
const Heading = ({ h, children }) => (
  <GroupTitle $h={h}><TitleTri width="12" height="8" viewBox="0 0 12 8"><path d="M.5.5h11L6 7.500z" fill="#333" /></TitleTri>{children}</GroupTitle>
);

export default function App() {
  return (
    <Window>
      <Global />
      <TitleBar>
        <Logo /><TitleText>*example</TitleText>
        <WinButtons>
          <svg width="11" height="11"><path d="M0 5.500h11" stroke="#999" /></svg>
          <svg width="17" height="11" viewBox="-4 0 17 11"><rect x=".5" y="2.500" width="7" height="8" rx="1" fill="none" stroke="#999" /><path d="M2.500.5H8q1.500 0 1.500 1.500v6" fill="none" stroke="#999" /></svg>
          <svg width="20" height="11" viewBox="-4 0 20 11"><path d="M.5.5l10 10M10.500.5l-10 10" stroke="#999" /></svg>
        </WinButtons>
      </TitleBar>
      <MenuBar>{MENUS.map(([t, w, plain]) => <MenuItem key={t} $w={w} $plain={plain}>{t}</MenuItem>)}</MenuBar>
      <Toolbar $h={39}>
        <Grip $w={6} $h={17} $m="0 1px 0 0" />
        <B n="save" /><Sep $w={7} />
        <B n="newLayout" /><B n="duplicate" /><B n="manager" /><B n="folder" /><B n="saveAs" /><Sep $w={9} />
        <B n="page" /><Sep $w={5} />
        <B n="printer" /><B n="exImage" /><B n="exSvg" /><B n="exPdf" /><B n="undo" /><B n="redo" $off />
        <Grip $w={6} $h={17} $m="0 2px 0 8px" />
        <B n="world" $off /><B n="first" $off /><B n="prev" $off />
        <PageCombo><PageValue>1</PageValue><DropCell $w={19}><Caret $c="#8c8c8c" /></DropCell></PageCombo>
        <B n="next" $off /><B n="last" $off /><B n="printerGray" $off /><B n="exGray" $off />
        <ToolButton $w={12}><Caret $c="#8c8c8c" /></ToolButton>
        <B n="atlasSet" />
      </Toolbar>
      <Toolbar $h={38}>
        <Grip $w={6} $h={17} $m="0 1px 0 0" />
        <B n="zoomIn" /><B n="zoomOut" /><B n="zoomOne" /><B n="zoomFull" /><B n="refresh" />
        <Grip $w={6} $h={17} $m="0 2px 0 8px" />
        <B n="lock" /><B n="unlock" /><B n="group" /><B n="ungroup" /><B n="raise" /><B n="align" /><B n="distribute" /><B n="resize" />
      </Toolbar>
      <Body>
        <SideTools>
          <Grip $w={17} $h={6} $m="0 0 1px 2px" />
          {SIDE.map(n => <SideButton key={n} $on={n === 'moveContent'}><Icon n={n} /></SideButton>)}
        </SideTools>
        <Center>
          <RulerRow><HRuler /></RulerRow>
          <VRuler />
          <Canvas><Sheet /><Glacier /><Frame /></Canvas>
        </Center>
        <Splitter><Grip $w={3} $h={17} $m="0 0 0 3px" /></Splitter>
        <Dock>
          <Tabs $h={24}><Tab $w={48} $on $first>Items</Tab><Tab $w={84}>Undo History</Tab></Tabs>
          <DockTitle>Items<TitleIcons><Float /><CloseX /></TitleIcons></DockTitle>
          <Tree>
            <TreeHead>
              <HeadCell $w="43px" $pl={2}><Icon n="eyeGray" s={15} /></HeadCell>
              <HeadCell $w="43px" $pl={3}><Icon n="padlock" s={14} /></HeadCell>
              <HeadCell $w="500px" $pl={3} $last>Item</HeadCell>
            </TreeHead>
            <TreeRow><Box $s={14} $mr={29}><Tick s={9} /></Box><Box $s={14} $mr={30} /><Icon n="mapItem" s={18} /><TreeName>Map 1</TreeName></TreeRow>
          </Tree>
          <SplitDots><Grip $w={17} $h={3} /></SplitDots>
          <Tabs $h={22}><Tab $w={55} $first>Layout</Tab><Tab $w={92} $on>Item Properties</Tab><Tab $w={54}>Guides</Tab><Tab $w={45}>Atlas</Tab></Tabs>
          <DockTitle>Item Properties<TitleIcons><Float /><CloseX /></TitleIcons></DockTitle>
          <ItemBar>Map 1</ItemBar>
          <PropTools>
            <P n="refresh" /><Sep $w={6} /><P n="mapIn" /><P n="mapOut" /><Sep $w={6} /><P n="scaleIn" /><P n="scaleOut" /><Sep $w={8} />
            <P n="bookmark" /><P n="extent" w={24} /><Sep $w={7} /><ToolButton $w={26}><AbcTag>abc</AbcTag></ToolButton><P n="clip" w={24} />
          </PropTools>
          <Scroll>
            <Props>
              <Heading h={32}>Main Properties</Heading>
              <Group $h={146} $pt={8}>
                <Row $h={26} $mb={9}><Lbl $w={78}>Scale</Lbl><Input><InputText>16000</InputText></Input><DataOverride /></Row>
                <Row $h={24} $mb={8}><Lbl $w={78}>Map rotation</Lbl><Input $pl={4}><InputText>0.00 °</InputText><Spin><Caret $up /><Caret /></Spin></Input><DataOverride /></Row>
                <Row $h={28} $mb={8}><Lbl $w={78}>CRS</Lbl><Select>Use Project CRS<Caret $s={5} /></Select><SquareBtn $ml="5px"><Icon n="globe" s={20} /></SquareBtn><DataOverride /></Row>
                <Row $h={17} $mb={0}><Box $s={17} $mr={6}><Tick s={11} /></Box><CheckLabel>Draw map canvas items</CheckLabel></Row>
              </Group>
              <Heading h={27}>Layers</Heading>
              <Group $h={112} $pt={9}>
                <Row $h={24} $mb={8}><Box $s={17} $mr={6} /><CheckLabel>Follow map theme</CheckLabel><Select $w={262}>(none)<Caret $s={5} /></Select><DataOverride /></Row>
                <Row $h={28} $mb={6}><Box $s={17} $mr={6} /><CheckLabel>Lock layers</CheckLabel><SquareBtn $ml="0"><Icon n="eye" s={20} /></SquareBtn><DataOverride /></Row>
                <Row $h={20} $mb={0}><Box $s={17} $mr={6} $off /><CheckLabel $off>Lock styles for layers</CheckLabel></Row>
              </Group>
              <Heading h={27}>Extents</Heading>
              <Group $h={180} $pt={8}>
                {EXTENTS.map(([k, v]) => <Row key={k} $h={26} $mb={8}><Lbl $w={42}>{k}</Lbl><Input><InputText>{v}</InputText></Input><DataOverride /></Row>)}
              </Group>
            </Props>
            <ScrollBar><ScrollEnd $edge="bottom"><Caret $up /></ScrollEnd><Thumb /><ThumbGap /><ScrollEnd $edge="top"><Caret /></ScrollEnd></ScrollBar>
          </Scroll>
        </Dock>
      </Body>
      <Status>
        <StatusText $w={106}>x: 0 mm</StatusText><StatusText $w={106}>y: -13 mm</StatusText><StatusText $w={106}>page: 1</StatusText>
        <ZoomBox><ZoomValue>71.0%</ZoomValue><DropCell $w={19}><Caret $s={3.5} /></DropCell></ZoomBox>
        <Slider><GrooveL /><Knob /><GrooveR /></Slider>
      </Status>
    </Window>
  );
}
